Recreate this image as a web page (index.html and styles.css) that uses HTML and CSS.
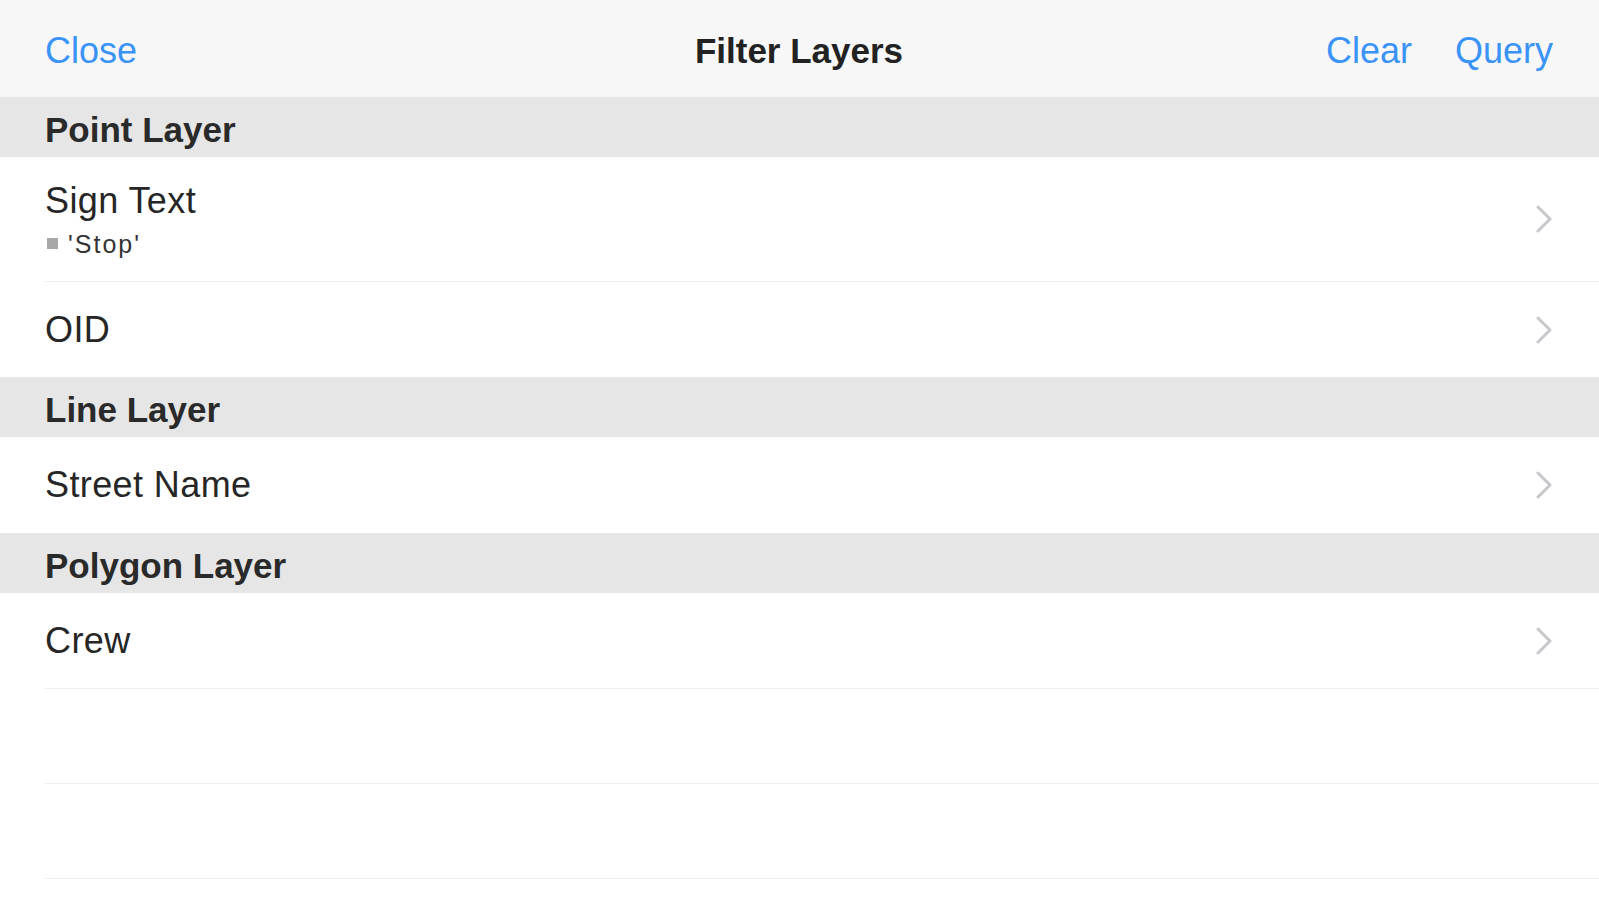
FILE: index.html
```html
<!DOCTYPE html>
<html>
<head>
<meta charset="utf-8">
<title>Filter Layers</title>
<link rel="stylesheet" href="styles.css">
</head>
<body>
<header class="nav">
  <div class="nav-left"><span class="nav-btn">Close</span></div>
  <div class="nav-title">Filter Layers</div>
  <div class="nav-right"><span class="nav-btn">Clear</span><span class="nav-btn">Query</span></div>
</header>

<div class="section">Point Layer</div>
<div class="row row-tall row-sep">
  <div class="row-text">
    <div class="row-title">Sign Text</div>
    <div class="row-sub"><span class="sub-square"></span>'Stop'</div>
  </div>
  <svg class="chev" viewBox="0 0 16 28" width="16" height="28"><path d="M2 2 L14 14 L2 26" fill="none" stroke="#c7c7cc" stroke-width="3" stroke-linecap="round" stroke-linejoin="round"/></svg>
</div>
<div class="row">
  <div class="row-title">OID</div>
  <svg class="chev" viewBox="0 0 16 28" width="16" height="28"><path d="M2 2 L14 14 L2 26" fill="none" stroke="#c7c7cc" stroke-width="3" stroke-linecap="round" stroke-linejoin="round"/></svg>
</div>

<div class="section">Line Layer</div>
<div class="row row-96">
  <div class="row-title">Street Name</div>
  <svg class="chev" viewBox="0 0 16 28" width="16" height="28"><path d="M2 2 L14 14 L2 26" fill="none" stroke="#c7c7cc" stroke-width="3" stroke-linecap="round" stroke-linejoin="round"/></svg>
</div>

<div class="section">Polygon Layer</div>
<div class="row row-sep">
  <div class="row-title">Crew</div>
  <svg class="chev" viewBox="0 0 16 28" width="16" height="28"><path d="M2 2 L14 14 L2 26" fill="none" stroke="#c7c7cc" stroke-width="3" stroke-linecap="round" stroke-linejoin="round"/></svg>
</div>
<div class="row row-empty row-sep"></div>
<div class="row row-empty row-sep"></div>
</body>
</html>
```

FILE: styles.css
```css
html, body {
  margin: 0;
  padding: 0;
  background: #ffffff;
}
body {
  font-family: "Liberation Sans", Arial, sans-serif;
  color: #262626;
  overflow: hidden;
}
.nav {
  height: 97px;
  box-sizing: border-box;
  background: #f7f7f7;
  display: grid;
  grid-template-columns: 1fr auto 1fr;
  align-items: center;
  padding: 4px 46px 0 45px;
}
.nav-btn {
  font-size: 36px;
  color: #3a93f6;
  line-height: 40px;
}
.nav-left {
  display: flex;
}
.nav-right {
  display: flex;
  justify-content: flex-end;
  gap: 43px;
}
.nav-title {
  font-size: 35px;
  font-weight: bold;
  color: #222222;
  line-height: 40px;
}
.section {
  height: 60px;
  box-sizing: border-box;
  background: #e6e6e6;
  padding: 6px 0 0 45px;
  display: flex;
  align-items: center;
  font-size: 35px;
  font-weight: bold;
  color: #2a2a2a;
}
.row {
  height: 95px;
  box-sizing: border-box;
  margin-left: 45px;
  padding-right: 47px;
  display: flex;
  align-items: center;
  justify-content: space-between;
  background: #ffffff;
}
.row-96 {
  height: 96px;
}
.row-tall {
  height: 125px;
}
.row-sep {
  height: 96px;
  border-bottom: 1px solid #eeeeee;
}
.row-tall.row-sep {
  height: 125px;
}
.row-empty {
  height: 95px;
}
.row-title {
  font-size: 36px;
  line-height: 40px;
  letter-spacing: 0.4px;
  color: #262626;
}
.row-text {
  display: flex;
  flex-direction: column;
}
.row-sub {
  display: flex;
  align-items: center;
  font-size: 25px;
  line-height: 28px;
  color: #333333;
  margin-top: 9px;
  letter-spacing: 2px;
}
.sub-square {
  width: 11px;
  height: 11px;
  background: #a8a8a8;
  margin: 0 10px 0 2px;
}
.chev {
  display: block;
  flex: none;
}
```
